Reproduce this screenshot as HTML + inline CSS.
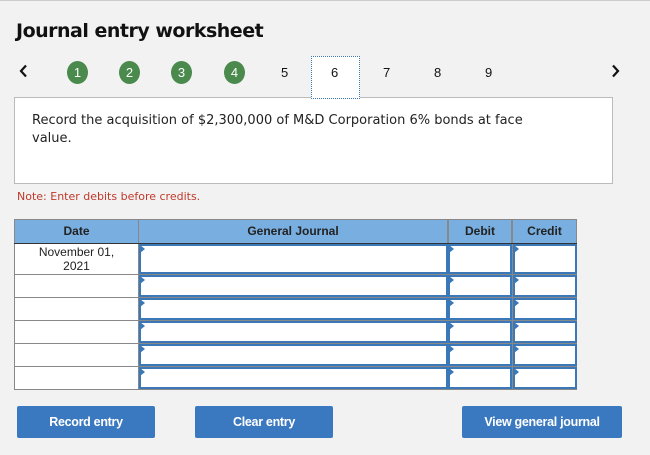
<!DOCTYPE html>
<html><head><style>
body{margin:0;width:650px;height:455px;background:#f2f2f2;font-family:"Liberation Sans",sans-serif;position:relative;overflow:hidden}
.a{position:absolute}
.top{left:0;top:0;width:650px;height:1px;background:#ccc}
h1{position:absolute;left:16px;top:20px;margin:0;font-size:19px;font-weight:bold;color:#111;font-family:"DejaVu Sans",sans-serif;letter-spacing:-0.5px}
.c{width:21px;height:23px;border-radius:50%;background:#4a8a4d;color:#fff;font-size:13px;text-align:center;line-height:23px;top:61px}
.n{top:62px;font-size:13px;line-height:21px;color:#111}
.box{left:14px;top:97px;width:597px;height:85px;background:#fff;border:1px solid #bbb}
.t{font-size:13px;color:#222;line-height:18px;font-family:"DejaVu Sans",sans-serif}
.cell{position:absolute;background:#fff;box-sizing:border-box}
.in{position:absolute;background:#fff;border:2px solid #3a78b8;box-sizing:border-box}
.in:before{content:"";position:absolute;left:-1px;top:-1px;border-left:5px solid #3a78b8;border-top:4px solid transparent;border-bottom:4px solid transparent}
.btn{position:absolute;top:406px;height:32px;background:#3a78c0;color:#fff;font-weight:bold;font-size:12.5px;text-align:center;line-height:32px;border-radius:2px;letter-spacing:-0.3px}
.ar{position:absolute;top:64px;width:12px;height:14px}
</style></head><body>
<div class="a top"></div>
<h1>Journal entry worksheet</h1>
<svg class="ar" style="left:18px" viewBox="0 0 12 14"><path d="M8 1.5 L3 7 L8 12.5" fill="none" stroke="#111" stroke-width="2.2"/></svg>
<svg class="ar" style="left:609px" viewBox="0 0 12 14"><path d="M4 1.5 L9 7 L4 12.5" fill="none" stroke="#111" stroke-width="2.2"/></svg>
<div class="a c" style="left:67px">1</div>
<div class="a c" style="left:119px">2</div>
<div class="a c" style="left:171px">3</div>
<div class="a c" style="left:224px">4</div>
<div class="a n" style="left:281px">5</div>
<div class="a" style="left:311px;top:56px;width:49px;height:43px;background:#fff;border:1px dotted #3a78b8;box-sizing:border-box;z-index:2"></div>
<div class="a n" style="left:331px;z-index:3">6</div>
<div class="a n" style="left:383px">7</div>
<div class="a n" style="left:434px">8</div>
<div class="a n" style="left:485px">9</div>
<div class="a box"><div class="a t" style="left:17px;top:14px;width:520px">Record the acquisition of $2,300,000 of M&amp;D Corporation 6% bonds at face value.</div></div>
<div class="a" style="left:17px;top:190px;font-size:11px;color:#c0392b;font-family:'DejaVu Sans',sans-serif">Note: Enter debits before credits.</div>
<div class="a" style="left:14px;top:219px;width:563px;height:171px;background:#888"></div>
<div class="cell" style="left:15px;top:220px;width:123px;height:23px;background:#78aee0;font-weight:bold;font-size:12px;text-align:center;line-height:22px;color:#222">Date</div>
<div class="cell" style="left:139px;top:220px;width:308px;height:23px;background:#78aee0;font-weight:bold;font-size:12px;text-align:center;line-height:22px;color:#222">General Journal</div>
<div class="cell" style="left:449px;top:220px;width:62px;height:23px;background:#78aee0;font-weight:bold;font-size:12px;text-align:center;line-height:22px;color:#222">Debit</div>
<div class="cell" style="left:513px;top:220px;width:63px;height:23px;background:#78aee0;font-weight:bold;font-size:12px;text-align:center;line-height:22px;color:#222">Credit</div>
<div class="a" style="left:14px;top:243px;width:563px;height:1px;background:#333"></div>
<div class="cell" style="left:15px;top:244px;width:123px;height:30px;font-size:12px;text-align:center;line-height:14px;color:#222;padding-top:1px">November 01,<br>2021</div>
<div class="in" style="left:139px;top:244px;width:309px;height:30px"></div>
<div class="in" style="left:448px;top:244px;width:64px;height:30px"></div>
<div class="in" style="left:513px;top:244px;width:64px;height:30px"></div>
<div class="cell" style="left:15px;top:275px;width:123px;height:22px"></div>
<div class="in" style="left:139px;top:275px;width:309px;height:22px"></div>
<div class="in" style="left:448px;top:275px;width:64px;height:22px"></div>
<div class="in" style="left:513px;top:275px;width:64px;height:22px"></div>
<div class="cell" style="left:15px;top:298px;width:123px;height:22px"></div>
<div class="in" style="left:139px;top:298px;width:309px;height:22px"></div>
<div class="in" style="left:448px;top:298px;width:64px;height:22px"></div>
<div class="in" style="left:513px;top:298px;width:64px;height:22px"></div>
<div class="cell" style="left:15px;top:321px;width:123px;height:22px"></div>
<div class="in" style="left:139px;top:321px;width:309px;height:22px"></div>
<div class="in" style="left:448px;top:321px;width:64px;height:22px"></div>
<div class="in" style="left:513px;top:321px;width:64px;height:22px"></div>
<div class="cell" style="left:15px;top:344px;width:123px;height:22px"></div>
<div class="in" style="left:139px;top:344px;width:309px;height:22px"></div>
<div class="in" style="left:448px;top:344px;width:64px;height:22px"></div>
<div class="in" style="left:513px;top:344px;width:64px;height:22px"></div>
<div class="cell" style="left:15px;top:367px;width:123px;height:22px"></div>
<div class="in" style="left:139px;top:367px;width:309px;height:22px"></div>
<div class="in" style="left:448px;top:367px;width:64px;height:22px"></div>
<div class="in" style="left:513px;top:367px;width:64px;height:22px"></div>
<div class="btn" style="left:17px;width:138px">Record entry</div>
<div class="btn" style="left:195px;width:138px">Clear entry</div>
<div class="btn" style="left:462px;width:160px">View general journal</div>
</body></html>
